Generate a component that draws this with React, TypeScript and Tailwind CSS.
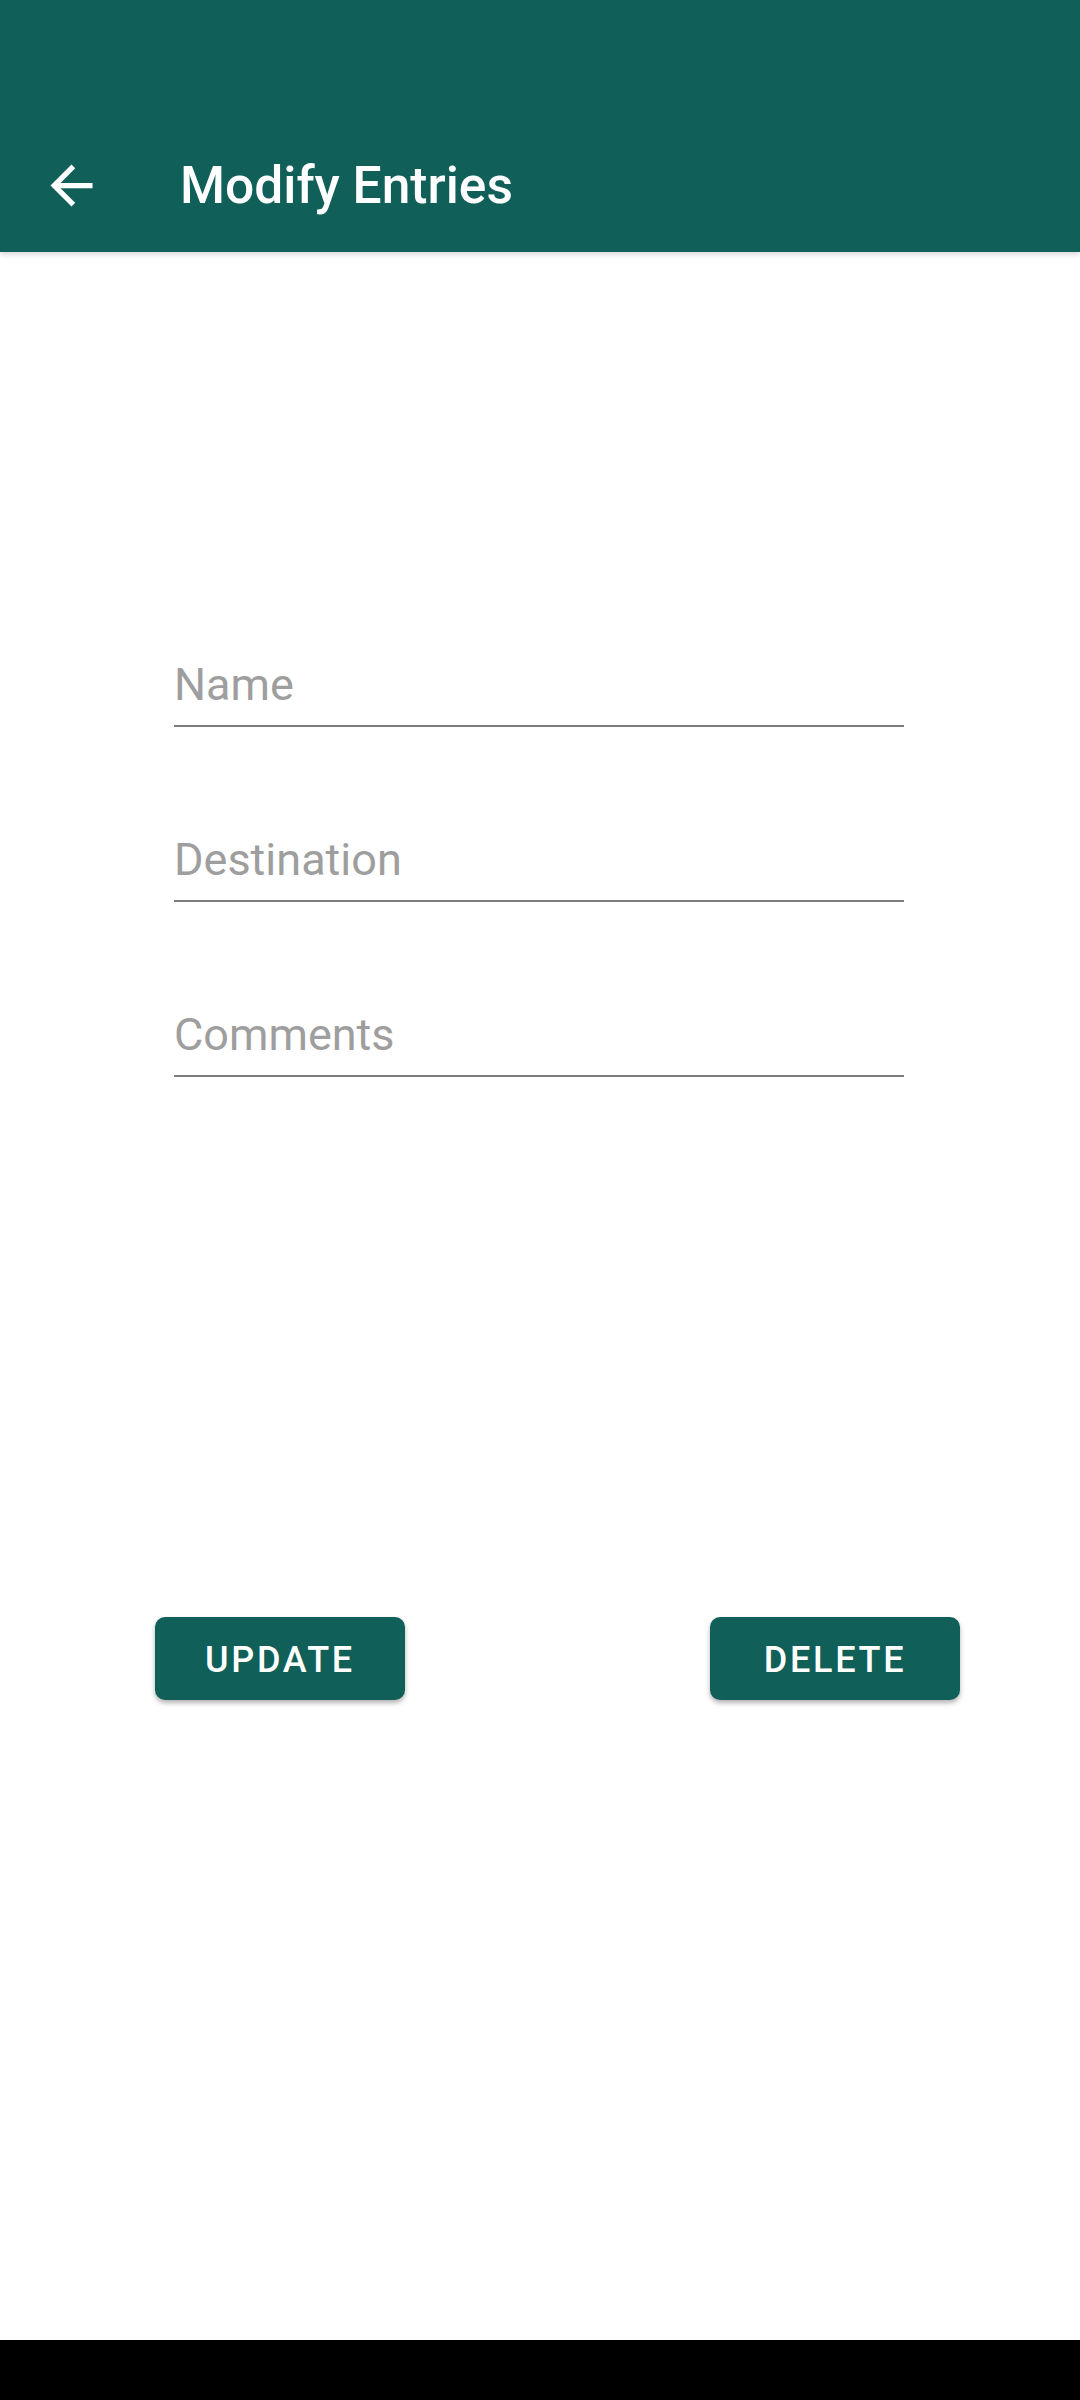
import React from 'react';

const fields = ['Name', 'Destination', 'Comments'];

const BackArrow: React.FC = () => (
  <svg viewBox="0 0 24 24" className="h-[63px] w-[63px] shrink-0" fill="white">
    <path d="M20 11H7.83l5.59-5.59L12 4l-8 8 8 8 1.41-1.41L7.83 13H20v-2z" />
  </svg>
);

export default function App() {
  return (
    <div className="flex h-[2400px] w-[1080px] flex-col bg-white font-['Roboto',sans-serif]">
      <header className="relative z-10 h-[252px] bg-[#105f58] pt-[154px] pl-[40px] shadow-[0_2px_6px_rgba(0,0,0,0.18)]">
        <div className="flex h-[63px] items-center">
          <BackArrow />
          <h1 className="ml-[77px] text-[51.5px] leading-none font-medium text-white">Modify Entries</h1>
        </div>
      </header>

      <main className="flex flex-1 flex-col">
        <div className="flex flex-col gap-[105px] pt-[405px] pl-[174px]">
          {fields.map((f) => (
            <div key={f} className="w-[730px] border-b-2 border-[#7c7c7c] pb-[12px]">
              <div className="h-[56px] text-[45px] leading-[56px] text-[#9e9e9e]">{f}</div>
            </div>
          ))}
        </div>

        <div className="mt-[540px] flex justify-between pr-[120px] pl-[155px]">
          {['Update', 'Delete'].map((b) => (
            <button
              key={b}
              className="flex h-[83px] w-[250px] items-center justify-center rounded-[10px] bg-[#105f58] pt-[2px] text-[36px] font-medium tracking-[0.075em] text-white uppercase shadow-[0_3px_5px_rgba(0,0,0,0.3)]"
            >
              {b}
            </button>
          ))}
        </div>
      </main>

      <div className="h-[60px] bg-black" />
    </div>
  );
}
